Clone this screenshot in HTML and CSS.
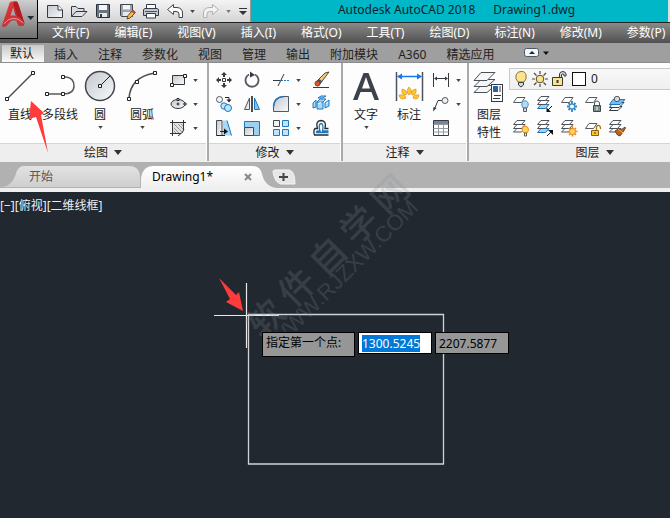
FILE: index.html
```html
<!DOCTYPE html>
<html lang="zh-CN">
<head>
<meta charset="utf-8">
<title>Autodesk AutoCAD 2018</title>
<link rel="stylesheet" href="styles.css">
</head>
<body>
<svg class="defs" aria-hidden="true">
  <defs>
    <linearGradient id="metal" x1="0" y1="0" x2="1" y2="1"><stop offset="0" stop-color="#c3c8ce"/><stop offset="1" stop-color="#f8f9fa"/></linearGradient>
    <linearGradient id="red" x1="0" y1="0" x2="1" y2="1"><stop offset="0" stop-color="#ef4545"/><stop offset="1" stop-color="#a3161c"/></linearGradient>
    <linearGradient id="tabOff" x1="0" y1="0" x2="0" y2="1"><stop offset="0" stop-color="#e2e2e2"/><stop offset="1" stop-color="#cfcfcf"/></linearGradient>
    <linearGradient id="tabOn" x1="0" y1="0" x2="0" y2="1"><stop offset="0" stop-color="#ffffff"/><stop offset="1" stop-color="#efefef"/></linearGradient>
    <symbol id="sheet" viewBox="0 0 18 18"><path d="M5 5.500H13L9.500 10.500H1.500Z" fill="#fff" stroke="#555b63"/></symbol>
    <symbol id="stack" viewBox="0 0 18 18"><g fill="#fff" stroke="#4b525a"><path d="M5 9.500H13L9.500 13H1.500Z"/><path d="M5 5.500H13L9.500 9.500H1.500Z"/><path d="M5 1.500H13L9.500 5.500H1.500Z"/></g></symbol>
    <symbol id="stackBlue" viewBox="0 0 18 18"><path d="M5 9.500H13L9.500 13.500H1.500Z" fill="#9fd3f5" stroke="#1a76bd"/><g fill="#fff" stroke="#4b525a"><path d="M5 5.500H13L9.500 9.500H1.500Z"/><path d="M5 1.500H13L9.500 5.500H1.500Z"/></g></symbol>
  </defs>
</svg>

<header class="top">
  <button class="app-menu" aria-label="应用程序菜单">
    <svg class="logo" viewBox="0 0 38 38">
      <path d="M2 26L10 2Q11 1 13 1H17Q18 1 19 4L25 23Q25 26 22 26H19L17 20H9L7 26Q4 28 2 26Z" fill="url(#red)"/>
      <path d="M14 1H17Q18 1 19 4L25 23L20 21L14 5Z" fill="#b01c22"/>
      <path d="M10.500 16L13.500 7L16 16Z" fill="#a8a8a8"/>
      <path d="M2 26L8 17Q13 13 21 18L25 23Q24 27 19 26L17 21Q12 18 7 26Q4 28 2 26Z" fill="#c9353a"/>
      <path d="M4 24Q13 13 24 23" fill="none" stroke="#e99a9a"/>
      <path d="M28 16H35L31.500 20Z" fill="#1f2b36"/>
    </svg>
  </button>
  <div class="title-row">
    <div class="quick">
      <button aria-label="新建"><svg class="q" viewBox="0 0 18 18"><path d="M1.500 3.500H12L16.500 8V15.500H1.500Z" fill="url(#metal)" stroke="#333b44"/><path d="M12 3.500V8H16.500" fill="#fff" stroke="#333b44"/></svg></button>
      <button aria-label="打开"><svg class="q" viewBox="0 0 18 18"><path d="M1.500 14.500V4.500H6L8 6.500H14V9" fill="#d9dde1" stroke="#333b44"/><path d="M1.500 14.500L6 9.500H17L12 14.500Z" fill="url(#metal)" stroke="#333b44"/></svg></button>
      <button aria-label="保存"><svg class="q" viewBox="0 0 18 18"><path d="M2.500 2.500H15.500V15.500H3.500L2.500 14.500Z" fill="#69737e" stroke="#28323c"/><path d="M5 3H13V8H5Z" fill="#f4f5f6"/><path d="M5 11H13V15H5Z" fill="#e7eaec"/><path d="M6 12H8V15H6Z" fill="#333b44"/></svg></button>
      <button aria-label="另存为"><svg class="q" viewBox="0 0 18 18"><path d="M2.500 2.500H14.500V14.500H3.500L2.500 13.500Z" fill="#9aa2aa" stroke="#3d4650"/><path d="M5 3H12V7.500H5Z" fill="#f4f5f6"/><path d="M5 10H12V14H5Z" fill="#e7eaec"/><path d="M9 17L10 13.500L15 8L17.500 10.500L12 16Z" fill="#f5bd42" stroke="#714c1d"/><path d="M15 8L17.500 10.500L16 12L13.500 9.500Z" fill="#cf4736"/></svg></button>
      <button aria-label="打印"><svg class="q" viewBox="0 0 18 18"><path d="M4.500 7V2.500H13.500V7" fill="#fff" stroke="#333b44"/><path d="M1.500 7.500L3 6.500H15L16.500 7.500V13.500H1.500Z" fill="#c2c8cd" stroke="#333b44"/><path d="M4.500 11.500H13.500V16H4.500Z" fill="#fff" stroke="#333b44"/><path d="M3 9.500H15" stroke="#4b5660"/></svg></button>
      <button aria-label="放弃"><svg class="q" viewBox="0 0 18 18"><path d="M1.500 7.500L7.500 2.500V5.500H11Q16.500 6 16.500 11V15.500H13V12Q13 9.500 10 9.500H7.500V12.500Z" fill="#fff" stroke="#3c454e"/></svg></button>
      <button class="narrow" aria-label="放弃列表"><svg class="caret" viewBox="0 0 6 4"><path d="M0 0H6L3 4Z" fill="#444"/></svg></button>
      <button aria-label="重做"><svg class="q" viewBox="0 0 18 18"><path d="M16.500 7.500L10.500 2.500V5.500H7Q1.500 6 1.500 11V15.500H5V12Q5 9.500 8 9.500H10.500V12.500Z" fill="#f2f2f2" stroke="#b1b1b1"/></svg></button>
      <button class="narrow" aria-label="重做列表"><svg class="caret" viewBox="0 0 6 4"><path d="M0 0H6L3 4Z" fill="#777"/></svg></button>
      <button class="custom" aria-label="自定义"><svg class="q" viewBox="0 0 18 18"><path d="M5 6.500H13" stroke="#333"/><path d="M5 9H13L9 13Z" fill="#333"/></svg></button>
    </div>
    <div class="title"><span>Autodesk AutoCAD 2018</span><span>Drawing1.dwg</span></div>
  </div>
  <nav class="menus">
    <button>文件(F)</button><button>编辑(E)</button><button>视图(V)</button><button>插入(I)</button><button>格式(O)</button><button>工具(T)</button><button>绘图(D)</button><button>标注(N)</button><button>修改(M)</button><button>参数(P)</button>
  </nav>
</header>

<nav class="ribbon-tabs">
  <button class="active">默认</button><button>插入</button><button>注释</button><button>参数化</button><button>视图</button><button>管理</button><button>输出</button><button>附加模块</button><button>A360</button><button>精选应用</button>
  <button class="minimize" aria-label="最小化功能区"><svg viewBox="0 0 26 10"><rect x=".5" y=".5" width="14" height="8" rx="2" fill="#f3f6fa" stroke="#4d5967"/><path d="M5 6H11L8 3Z" fill="#222"/><path d="M19 3.500H25L22 7Z" fill="#111"/></svg></button>
</nav>

<main class="ribbon">
  <section class="panel draw">
    <div class="body">
      <button class="big"><svg viewBox="0 0 40 36"><path d="M7 31L33 5" stroke="#4b5056" stroke-width="1.500"/><path d="M5.500 29.500h3v3h-3ZM31.500 3.500h3v3h-3Z" fill="#fff" stroke="#222"/></svg><span>直线</span></button>
      <button class="big"><svg viewBox="0 0 40 36"><path d="M7 26H23M23 9H26Q34 10 34 18Q34 26 23 26" fill="none" stroke="#555a60" stroke-width="1.500"/><path d="M5.500 24.500h3v3h-3ZM21.500 24.500h3v3h-3ZM21.500 7.500h3v3h-3Z" fill="#fff" stroke="#222"/></svg><span>多段线</span></button>
      <button class="big"><svg viewBox="0 0 40 36"><circle cx="20" cy="18" r="14.500" fill="url(#metal)" stroke="#42474d" stroke-width="1.500"/><path d="M20 18L30 8" stroke="#222"/><path d="M18.500 16.500h3v3h-3Z" fill="#fff" stroke="#222"/></svg><span>圆</span><svg class="caret" viewBox="0 0 6 4"><path d="M0 0H6L3 4Z" fill="#444"/></svg></button>
      <button class="big"><svg viewBox="0 0 40 36"><path d="M7 31Q8 9 33 5" fill="none" stroke="#4b5056" stroke-width="1.500"/><path d="M5.500 29.500h3v3h-3ZM13.500 12.500h3v3h-3ZM31.500 3.500h3v3h-3Z" fill="#fff" stroke="#222"/></svg><span>圆弧</span><svg class="caret" viewBox="0 0 6 4"><path d="M0 0H6L3 4Z" fill="#444"/></svg></button>
      <div class="tools three">
        <button class="drop" aria-label="矩形"><svg viewBox="0 0 18 18"><path d="M3.500 4.500H15.500V13.500H3.500Z" fill="url(#metal)" stroke="#30363c"/><path d="M1.500 12.500h3v3h-3ZM14.500 3.500h3v3h-3Z" fill="#fff" stroke="#222"/></svg><svg class="caret" viewBox="0 0 6 4"><path d="M0 0H6L3 4Z" fill="#444"/></svg></button>
        <button class="drop" aria-label="椭圆"><svg viewBox="0 0 18 18"><ellipse cx="9" cy="9" rx="7" ry="4.500" fill="url(#metal)" stroke="#30363c"/><path d="M7.500 9H10.500M9 7.500V10.500" stroke="#222"/><path d="M8 3.500h2v2h-2ZM15 8h2v2h-2Z" fill="#fff" stroke="#222"/></svg><svg class="caret" viewBox="0 0 6 4"><path d="M0 0H6L3 4Z" fill="#444"/></svg></button>
        <button class="drop" aria-label="图案填充"><svg viewBox="0 0 18 18"><path d="M4 4H14V14H4Z" fill="#e0e2e4"/><path d="M5 9l5 5M5 5l9 9M9 5l5 5M5 12l2 2M12 5l2 2" stroke="#777" stroke-width=".7"/><path d="M3.500 1V17M1 3.500H17M1 14.500H12M14.500 1V11M15 10Q15 13 9 17" fill="none" stroke="#30363c"/></svg><svg class="caret" viewBox="0 0 6 4"><path d="M0 0H6L3 4Z" fill="#444"/></svg></button>
      </div>
    </div>
    <button class="panel-title">绘图<svg viewBox="0 0 8 5"><path d="M0 0H8L4 5Z" fill="#333"/></svg></button>
  </section>

  <section class="panel modify">
    <div class="body">
      <div class="tools modify-tools">
        <button aria-label="移动"><svg viewBox="0 0 18 18"><path d="M9 3V6M9 12V15M3 9H6M12 9H15" stroke="#333a42" stroke-width="2"/><path d="M9 1L12 4H6ZM9 17L12 14H6ZM1 9L4 6V12ZM17 9L14 6V12Z" fill="#333a42"/><path d="M7.500 7.500h3v3h-3Z" fill="#fff" stroke="#333a42"/></svg></button>
        <button aria-label="旋转"><svg viewBox="0 0 18 18"><path d="M6 3.500A6.500 6.500 0 1 0 12 3.500" fill="none" stroke="#555b63" stroke-width="1.800"/><path d="M7 .5L12 4L7 6.500Z" fill="#333a42"/></svg></button>
        <button class="drop" aria-label="修剪"><svg viewBox="0 0 18 18"><path d="M1 9.500H8" stroke="#333a42"/><path d="M9 9.500H18" stroke="#1d78bf" stroke-dasharray="2 1"/><path d="M6 15L12 3" stroke="#333a42"/></svg><svg class="caret" viewBox="0 0 6 4"><path d="M0 0H6L3 4Z" fill="#444"/></svg></button>
        <button aria-label="删除"><svg viewBox="0 0 18 18"><path d="M5 10L13 2L17 1L8 13Z" fill="#f5c983" stroke="#5d482d"/><path d="M5 10L8 13L10 10L7 8Z" fill="#45525d"/><circle cx="5.500" cy="12.500" r="2.500" fill="#e0562c" stroke="#913517"/><path d="M1 16.500H17" stroke="#333a42"/></svg></button>
        <button aria-label="复制"><svg viewBox="0 0 18 18"><circle cx="4.500" cy="4.500" r="3" fill="#f3f5f7" stroke="#515961"/><circle cx="9" cy="11" r="3.200" fill="#bfe4fb" stroke="#1d78bf"/><circle cx="13" cy="13" r="3.500" fill="#bfe4fb" stroke="#1d78bf"/><path d="M10 2.500H14V5" fill="none" stroke="#222"/><path d="M11.500 4.500H16.500L14 7.500Z" fill="#222"/></svg></button>
        <button aria-label="镜像"><svg viewBox="0 0 18 18"><path d="M6.500 3V14.500H1.500Z" fill="url(#metal)" stroke="#515961"/><path d="M11.500 3V14.500H16.500Z" fill="#80c4ef" stroke="#1d78bf"/><path d="M9 1V17" stroke="#111" stroke-width="1.500"/></svg></button>
        <button class="drop" aria-label="圆角"><svg viewBox="0 0 18 18"><path d="M1.500 16.500V11Q2 2 11 1.500H16.500V16.500Z" fill="url(#metal)" stroke="#515961"/><path d="M1.500 12Q2 2 12 1.500" fill="none" stroke="#1d78bf" stroke-width="1.500"/></svg><svg class="caret" viewBox="0 0 6 4"><path d="M0 0H6L3 4Z" fill="#444"/></svg></button>
        <button aria-label="分解"><svg viewBox="0 0 18 18"><path d="M5 7L8 4H14L11 7V14H5ZM11 7H5M1 8L4 5V12L1 13ZM13 8L17 5V11L13 13ZM6 3L9 1H14L11 3Z" fill="#a7daf8" stroke="#1d78bf"/><path d="M6 9L9 7M14 9L16 7" stroke="#fff"/></svg></button>
        <button aria-label="拉伸"><svg viewBox="0 0 18 18"><path d="M1.500 1.500H7V16.500H1.500Z" fill="url(#metal)" stroke="#424a52"/><path d="M8 1.500H12L16.500 16.500H8Z" fill="#a7daf8"/><path d="M12 1.500L16.500 16.500" stroke="#1d78bf"/><path d="M5 12.500H11M1.500 16.500H10" stroke="#222"/><path d="M9 9.500L13 12.500L9 15.500Z" fill="#111"/></svg></button>
        <button aria-label="缩放"><svg viewBox="0 0 18 18"><path d="M1.500 2.500H16.500V16.500H1.500Z" fill="#9cd1ef" stroke="#1d78bf"/><path d="M1.500 8.500H10.500V16.500H1.500Z" fill="url(#metal)" stroke="#424a52"/></svg></button>
        <button class="drop" aria-label="阵列"><svg viewBox="0 0 18 18"><path d="M1.500 1.500H7.500V7.500H1.500Z" fill="#f2f3f4" stroke="#424a52"/><path d="M10.500 1.500H16.500V7.500H10.500ZM1.500 10.500H7.500V16.500H1.500ZM10.500 10.500H16.500V16.500H10.500Z" fill="#bfe4fb" stroke="#1d78bf"/></svg><svg class="caret" viewBox="0 0 6 4"><path d="M0 0H6L3 4Z" fill="#444"/></svg></button>
        <button aria-label="偏移"><svg viewBox="0 0 18 18"><path d="M16.500 16H2.500Q1 12 3 9.500H5.500Q3 2 9 1.500Q15 2 13 9.500H16.500" fill="none" stroke="#24292e" stroke-width="1.300"/><path d="M16.500 13.500H4.500Q4 12 6 12H8Q6 5 9 4.500Q12 5 10.500 12H16.500" fill="none" stroke="#1d78bf" stroke-width="1.300"/></svg></button>
      </div>
    </div>
    <button class="panel-title">修改<svg viewBox="0 0 8 5"><path d="M0 0H8L4 5Z" fill="#333"/></svg></button>
  </section>

  <section class="panel annotate">
    <div class="body">
      <button class="big"><svg viewBox="0 0 40 36"><path d="M7 32L17.500 5H22.500L33 32H28.500L25.500 24H14.500L11.500 32ZM16 20.500H24L20 9Z" fill="#3b4249" fill-rule="evenodd"/></svg><span>文字</span><svg class="caret" viewBox="0 0 6 4"><path d="M0 0H6L3 4Z" fill="#444"/></svg></button>
      <button class="big"><svg viewBox="0 0 40 36"><path d="M7.500 4V33M33.500 4V33" stroke="#4c535b" stroke-width="1.500"/><path d="M9 8.500H32" stroke="#1678f0" stroke-width="1.500"/><path d="M8 8.500L13 5.500V11.500ZM33 8.500L28 5.500V11.500Z" fill="#1678f0"/><g fill="#ffc62e" stroke="#d88711" stroke-width=".6"><path d="M20 19Q25 24 20 27Q16 24 20 19ZM13 21Q19 22 17 27Q12 27 13 21ZM27 21Q28 27 23 27Q21 22 27 21ZM10 27Q16 26 17 30Q11 33 10 27ZM30 27Q29 33 24 30Q24 26 30 27Z"/></g></svg><span>标注</span></button>
      <div class="tools three">
        <button class="drop" aria-label="线性"><svg viewBox="0 0 18 18"><path d="M1.500 2V16M16.500 2V16M3 7.500H15" stroke="#333a42"/><path d="M2 7.500L5 5.500V9.500ZM16 7.500L13 5.500V9.500Z" fill="#333a42"/></svg><svg class="caret" viewBox="0 0 6 4"><path d="M0 0H6L3 4Z" fill="#444"/></svg></button>
        <button class="drop" aria-label="引线"><svg viewBox="0 0 18 18"><path d="M2.500 14L6 5.500H10" fill="none" stroke="#333a42"/><path d="M1 16.500L1.500 12L4.500 13Z" fill="#333a42"/><circle cx="13" cy="5.500" r="3" fill="#eef0f2" stroke="#555b63"/></svg><svg class="caret" viewBox="0 0 6 4"><path d="M0 0H6L3 4Z" fill="#444"/></svg></button>
        <button class="drop" aria-label="表格"><svg viewBox="0 0 18 18"><path d="M1.500 1.500H16.500V16.500H1.500Z" fill="#fff" stroke="#333a42"/><path d="M2 2H16V5H2Z" fill="#788797"/><path d="M1.500 5.500H16.500M1.500 9.500H16.500M1.500 13H16.500M6.500 5V16M11.500 5V16" stroke="#929aa2"/></svg></button>
      </div>
    </div>
    <button class="panel-title">注释<svg viewBox="0 0 8 5"><path d="M0 0H8L4 5Z" fill="#333"/></svg></button>
  </section>

  <section class="panel layers">
    <div class="body">
      <button class="big tall"><svg viewBox="0 0 40 36"><g fill="#f6f7f8" stroke="#4b525a"><path d="M12 17.500H26L18 24.500H5Z"/><path d="M12 11.500H26L18 18.500H5Z"/><path d="M12 4.500H26L18 12.500H5Z"/></g><rect x="22.500" y="16.500" width="11" height="17" fill="#fff" stroke="#333a42"/><path d="M24 18H29V24H24Z" fill="#27679b"/><path d="M30 19H32M30 21H32M30 23H32M25 27.500H32M24 30.500H31" stroke="#333a42"/></svg><span>图层</span><span>特性</span></button>
      <div class="layer-side">
        <div class="layer-combo">
          <svg viewBox="0 0 18 18"><path d="M6 12Q3 9 4 5Q6 1 9 1.500Q13 1 14 5Q15 9 12 12Z" fill="#fde48c" stroke="#8e7337"/><path d="M6.500 12.500H11.500V15L9 17L6.500 15Z" fill="#d2d6da" stroke="#333a42"/></svg>
          <svg viewBox="0 0 18 18"><path d="M9 1V4M9 14V17M1 9H4M14 9H17M3 3L5.500 5.500M12.500 12.500L15 15M3 15L5.500 12.500M12.500 5.500L15 3" stroke="#50483b" stroke-width="1.200"/><circle cx="9" cy="9" r="3.800" fill="#fde48c" stroke="#50483b"/></svg>
          <svg viewBox="0 0 18 18"><path d="M9.500 8V4Q10 1.500 13 1.500Q16 2 16 4V6H14V4.500Q12 3 11.500 5V8" fill="#d6d9dc" stroke="#333a42"/><path d="M2.500 7.500H12.500V15.500H2.500Z" fill="#fde48c" stroke="#333a42"/><path d="M7.500 10V13" stroke="#333a42" stroke-width="2"/></svg>
          <i class="swatch"></i>
          <select aria-label="图层"><option>0</option></select>
        </div>
        <div class="tools layer-tools">
          <button aria-label="关"><svg viewBox="0 0 18 18"><use href="#sheet" y="-3"/><path d="M11 13Q9 10 10 7.500Q13 4 16 7.500Q17 10 15 13Z" fill="#b3daf8" stroke="#5390c6"/><path d="M11.500 13H14.500V16.500H11.500Z" fill="#d9dde1" stroke="#555b63"/></svg></button>
          <button aria-label="隔离"><svg viewBox="0 0 18 18"><use href="#stackBlue"/><path d="M16 11L12 15" stroke="#111"/><path d="M10.500 12.500V17H15Z" fill="#111"/></svg></button>
          <button aria-label="冻结"><svg viewBox="0 0 18 18"><use href="#sheet" y="-3"/><path d="M12 6V17M7 11.500H17M8.500 8L15.500 15M15.500 8L8.500 15" stroke="#2785c7" stroke-width="1.800"/><circle cx="12" cy="11.500" r="2.500" fill="#fff" stroke="#2785c7"/></svg></button>
          <button aria-label="锁定"><svg viewBox="0 0 18 18"><use href="#sheet" y="-3"/><path d="M10.500 11V8Q11 6 13 6Q15 6 15.500 8V11" fill="none" stroke="#46515a"/><path d="M9.500 10.500H16.500V16.500H9.500Z" fill="#80908d" stroke="#3d4848"/><path d="M13 12V15" stroke="#fff"/></svg></button>
          <button aria-label="置为当前"><svg viewBox="0 0 18 18"><path d="M5 11.500H14L10 15.500H1.500Z" fill="#fff" stroke="#333a42"/><path d="M5 7.500H16L11 12.500H1.500Z" fill="#fff" stroke="#333a42"/><path d="M5 4.500H17L12 9.500H1.500Z" fill="#6fc0f4" stroke="#1d78bf"/><circle cx="9" cy="4" r="2.700" fill="#d9dde1" stroke="#555b63"/></svg></button>
          <button aria-label="打开所有图层"><svg viewBox="0 0 18 18"><use href="#stack"/><path d="M12 14Q9 11 10.500 8.500Q13 5.500 16 8.500Q17.500 11 15 14Z" fill="#ffd554" stroke="#f18b1b"/><path d="M12.500 14H14.500V17H12.500Z" fill="#fff" stroke="#555b63"/></svg></button>
          <button aria-label="取消隔离"><svg viewBox="0 0 18 18"><use href="#stackBlue"/><path d="M11 17L15 13" stroke="#111"/><path d="M12 11H17V16Z" fill="#111"/></svg></button>
          <button aria-label="解冻所有图层"><svg viewBox="0 0 18 18"><use href="#stack"/><path d="M12.500 7V17.500M7.500 12.500H17.500M9 9L16 16M16 9L9 16" stroke="#ed8618" stroke-width="1.500"/><circle cx="12.500" cy="12.500" r="3" fill="#ffd554" stroke="#ed8618"/></svg></button>
          <button aria-label="解锁"><svg viewBox="0 0 18 18"><use href="#sheet" y="-1"/><path d="M12.500 11V8Q13 6 15 6.500Q16.500 7 16.500 10" fill="none" stroke="#a47010" stroke-width="1.300"/><path d="M7.500 11.500H14.500V16.500H7.500Z" fill="#ffc62e" stroke="#8e5e0a"/><path d="M11 13V15" stroke="#333"/></svg></button>
          <button aria-label="匹配图层"><svg viewBox="0 0 18 18"><use href="#stack"/><path d="M17 8L13 11L10 10L7 12Q9 17 12 17L15 13L17.500 9Z" fill="#b8651c" stroke="#814111"/><path d="M10 10L15 14" stroke="#efc090"/></svg></button>
        </div>
      </div>
    </div>
    <button class="panel-title">图层<svg viewBox="0 0 8 5"><path d="M0 0H8L4 5Z" fill="#333"/></svg></button>
  </section>

  <svg class="pointer-line" viewBox="0 0 22 54"><path d="M3 0L1 18L8 16L20 52L13 14L16 12Z" fill="#ff3b3b"/></svg>
</main>

<section class="workspace">
  <div class="doc-tabs">
    <button class="doc start"><svg viewBox="0 0 142 26" preserveAspectRatio="none"><path d="M0 25Q12 25 16 12Q18 4 24 4H130Q141 4 141 16V25Z" fill="url(#tabOff)"/></svg><span>开始</span></button>
    <div class="doc current"><svg viewBox="0 0 138 26" preserveAspectRatio="none"><path d="M0 26V16Q2 4 12 4H112Q119 4 121 12Q124 25 136 26Z" fill="url(#tabOn)"/></svg><span>Drawing1*</span><button aria-label="关闭"><svg viewBox="0 0 8 8"><path d="M1 1L7 7M7 1L1 7" stroke="#888" stroke-width="2"/></svg></button></div>
    <button class="add" aria-label="新图形"><svg viewBox="0 0 24 16"><path d="M3 1H17Q23 2 23 15H9Q3 14 1 3Q1 1 3 1Z" fill="#e6e6e6" stroke="#f6f6f6"/><path d="M7 8H16M11.500 4V12" stroke="#444" stroke-width="2"/></svg></button>
  </div>
  <div class="canvas">
    <div class="view-label">[−][俯视][二维线框]</div>
    <svg class="drawing" viewBox="0 0 240 200">
      <path d="M34.500 39.500H229.500V189H34.500Z" fill="none" stroke="#d0d3d6" stroke-width="1.300"/>
      <path d="M0 40.500H65M32.500 8V73" stroke="#e8e8e8" stroke-width="1.200"/>
      <path d="M5 3L22 20L25 17L29 36L12 27L16 24Z" fill="#ff3b3b"/>
    </svg>
    <div class="prompt">
      <label for="px">指定第一个点:</label>
      <input id="px" value="1300.5245">
      <input id="py" value="2207.5877" aria-label="Y">
    </div>
  </div>
  <div class="watermark" aria-hidden="true">
    <div class="wm-name"><span>软</span><span>件</span><span>自</span><span>学</span><span>网</span></div>
    <div class="wm-site">WWW.RJZXW.COM</div>
  </div>
</section>
<script src="app.js"></script>
</body>
</html>
```
FILE: styles.css
```css
* { box-sizing: border-box; }
body {
  margin: 0;
  min-height: 100vh;
  display: flex;
  flex-direction: column;
  overflow: hidden;
  font: 12px/18px "Noto Sans", "Noto Sans CJK SC", sans-serif;
  color: #222;
  background: #212830;
}
button {
  margin: 0;
  padding: 0;
  border: 0;
  background: none;
  font: inherit;
  color: inherit;
  white-space: nowrap;
}
svg { display: block; flex: none; }
.defs { position: absolute; width: 0; height: 0; }
.caret { width: 5px; height: 3px; }

/* title bar and menus */
.top {
  display: grid;
  grid-template-columns: 38px minmax(0, 1fr);
  grid-template-rows: 23px 20px;
  background: linear-gradient(#777 22px, #888 24px, #505050 43px);
}
.app-menu {
  grid-row: 1 / 3;
  height: 39px;
  border: solid #000;
  border-width: 0 1px 1px 0;
  background: linear-gradient(#cfcfcf, #6f6f6f);
}
.logo { width: 37px; height: 38px; }
.title-row {
  display: flex;
  border-bottom: 1px solid #222;
  background: #dedede;
}
.quick {
  display: flex;
  align-items: center;
  flex: none;
  width: 213px;
  padding-left: 8px;
  gap: 6px;
  background: linear-gradient(#f4f4f4, #d5d5d5);
  border-right: 1px solid #999;
}
.quick .q { width: 18px; height: 18px; }
.quick .narrow { margin-right: 1px; }
.quick .custom { margin-left: -4px; }
.title {
  flex: 1;
  display: flex;
  justify-content: center;
  gap: 18px;
  margin-right: 2px;
  padding-right: 6px;
  background: #00b7c8;
  color: #08242a;
  line-height: 20px;
  white-space: nowrap;
}
.menus {
  display: flex;
  gap: 25px;
  padding-left: 14px;
  overflow: hidden;
  color: #fff;
  background: linear-gradient(#8a8a8a, #505050);
}
.ribbon-tabs {
  display: flex;
  height: 20px;
  background: #9f9f9f;
  border-bottom: 1px solid #8c8c8c;
}
.ribbon-tabs button { padding: 3px 10px 0; line-height: 18px; }
.ribbon-tabs .active {
  margin-top: 2px;
  padding: 0 10px 0 8px;
  border-left: 2px solid #9f9f9f;
  background: linear-gradient(#c8c8c8, #fafafa);
}
.ribbon-tabs .minimize { padding: 1px 0 0 20px; }
.minimize svg { width: 26px; height: 10px; }

/* ribbon panels */
.ribbon {
  position: relative;
  display: flex;
  background: #fdfdfd;
  border-bottom: 1px solid #eee;
}
.panel {
  display: flex;
  flex-direction: column;
  flex: none;
  border-right: 2px solid #aaa;
}
.draw { width: 209px; }
.modify { width: 134px; }
.annotate { width: 126px; }
.layers { flex: 1; min-width: 0; border: 0; }
.body { display: flex; height: 80px; padding-top: 5px; }
.panel-title {
  display: flex;
  justify-content: center;
  align-items: center;
  gap: 6px;
  height: 18px;
  margin-right: 1px;
  background: #eee;
  border-top: 1px solid #d5d5d5;
}
.panel-title svg { width: 8px; height: 5px; }
.layers .panel-title { padding-left: 50px; margin-right: 0; }
.big {
  width: 40px;
  display: flex;
  flex-direction: column;
  align-items: center;
}
.big > svg:first-child { width: 40px; height: 36px; }
.big span { line-height: 22px; }
.tall span { line-height: 18px; }
.tall span:first-of-type { padding-top: 2px; }
.draw .big:nth-child(4) { margin-left: 2px; }
.annotate .big { margin-left: 3px; }
.tools { display: grid; grid-auto-rows: 24px; align-items: center; }
.tools button { display: flex; align-items: center; gap: 6px; }
.tools button > svg:first-child { width: 18px; height: 18px; }
.three { margin-left: 7px; }
.annotate .three { margin-left: 3px; }
.modify-tools { grid-template-columns: 28px 29px 40px 24px; margin-left: 6px; }

.layer-side { flex: 1; min-width: 0; }
.layer-combo {
  display: flex;
  align-items: center;
  gap: 1px;
  height: 22px;
  padding-left: 2px;
  background: linear-gradient(#f8f8f8, #efefef);
  border: 1px solid #c9c9c9;
  border-right: 0;
}
.layer-combo svg { width: 18px; height: 18px; }
.swatch { width: 14px; height: 14px; margin-left: 3px; background: #fff; border: 1px solid #111; }
.layer-combo select {
  flex: 1;
  min-width: 0;
  padding: 0 4px;
  border: 0;
  appearance: none;
  background: none;
  font: inherit;
  color: #222;
}
.layer-tools { grid-template-columns: repeat(5, 24px); padding: 2px 0 0 3px; }
.pointer-line { position: absolute; left: 28px; top: 38px; width: 22px; height: 54px; }

/* documents and model space */
.workspace { position: relative; flex: 1; display: flex; flex-direction: column; }
.doc-tabs {
  display: flex;
  height: 30px;
  background: #b1b1b1;
  border-bottom: 4px solid #efefef;
}
.doc { position: relative; display: flex; align-items: center; height: 26px; }
.doc > svg { position: absolute; inset: 0; width: 100%; height: 100%; }
.doc span { position: relative; padding-top: 4px; }
.start { width: 141px; padding-left: 29px; color: #555; }
.current { width: 131px; padding-left: 11px; color: #000; }
.current > svg { width: 138px; }
.current button { position: relative; margin-left: auto; margin-right: 20px; padding-top: 4px; }
.current button svg { width: 8px; height: 8px; }
.add { position: relative; align-self: center; padding-top: 4px; }
.add svg { width: 24px; height: 16px; }
.canvas { position: relative; flex: 1; background: #212830; }
.view-label { padding-top: 5px; color: #eee; }
.drawing { position: absolute; left: 214px; top: 83px; width: 240px; height: 200px; }
.prompt {
  position: absolute;
  z-index: 2;
  left: 262px;
  top: 140px;
  display: flex;
  align-items: flex-start;
  gap: 3px;
  color: #000;
}
.prompt label {
  width: 93px;
  height: 25px;
  padding: 0 3px;
  line-height: 20px;
  background: #969696;
  border: 1px solid #000;
  white-space: nowrap;
}
.prompt input {
  width: 74px;
  height: 22px;
  padding: 0 3px;
  border: 1px solid #000;
  border-radius: 0;
  outline: 0;
  font: inherit;
  color: #000;
  background: #969696;
}
.prompt #px { background: #fff; }
.prompt input::selection { background: #0078d7; color: #fff; }
.watermark {
  position: absolute;
  left: 227px;
  top: 72px;
  width: 212px;
  transform: rotate(-45deg);
  color: #8c8e94;
  opacity: .22;
  pointer-events: none;
}
.wm-name {
  display: flex;
  justify-content: space-between;
  font: 500 36px/34px "Noto Sans CJK SC", sans-serif;
}
.wm-site {
  padding-right: 8px;
  font: 22px/20px "Liberation Sans", sans-serif;
  text-align: right;
}
```
FILE: app.js
```js
const first = document.getElementById("px");
first.focus();
first.select();
```
